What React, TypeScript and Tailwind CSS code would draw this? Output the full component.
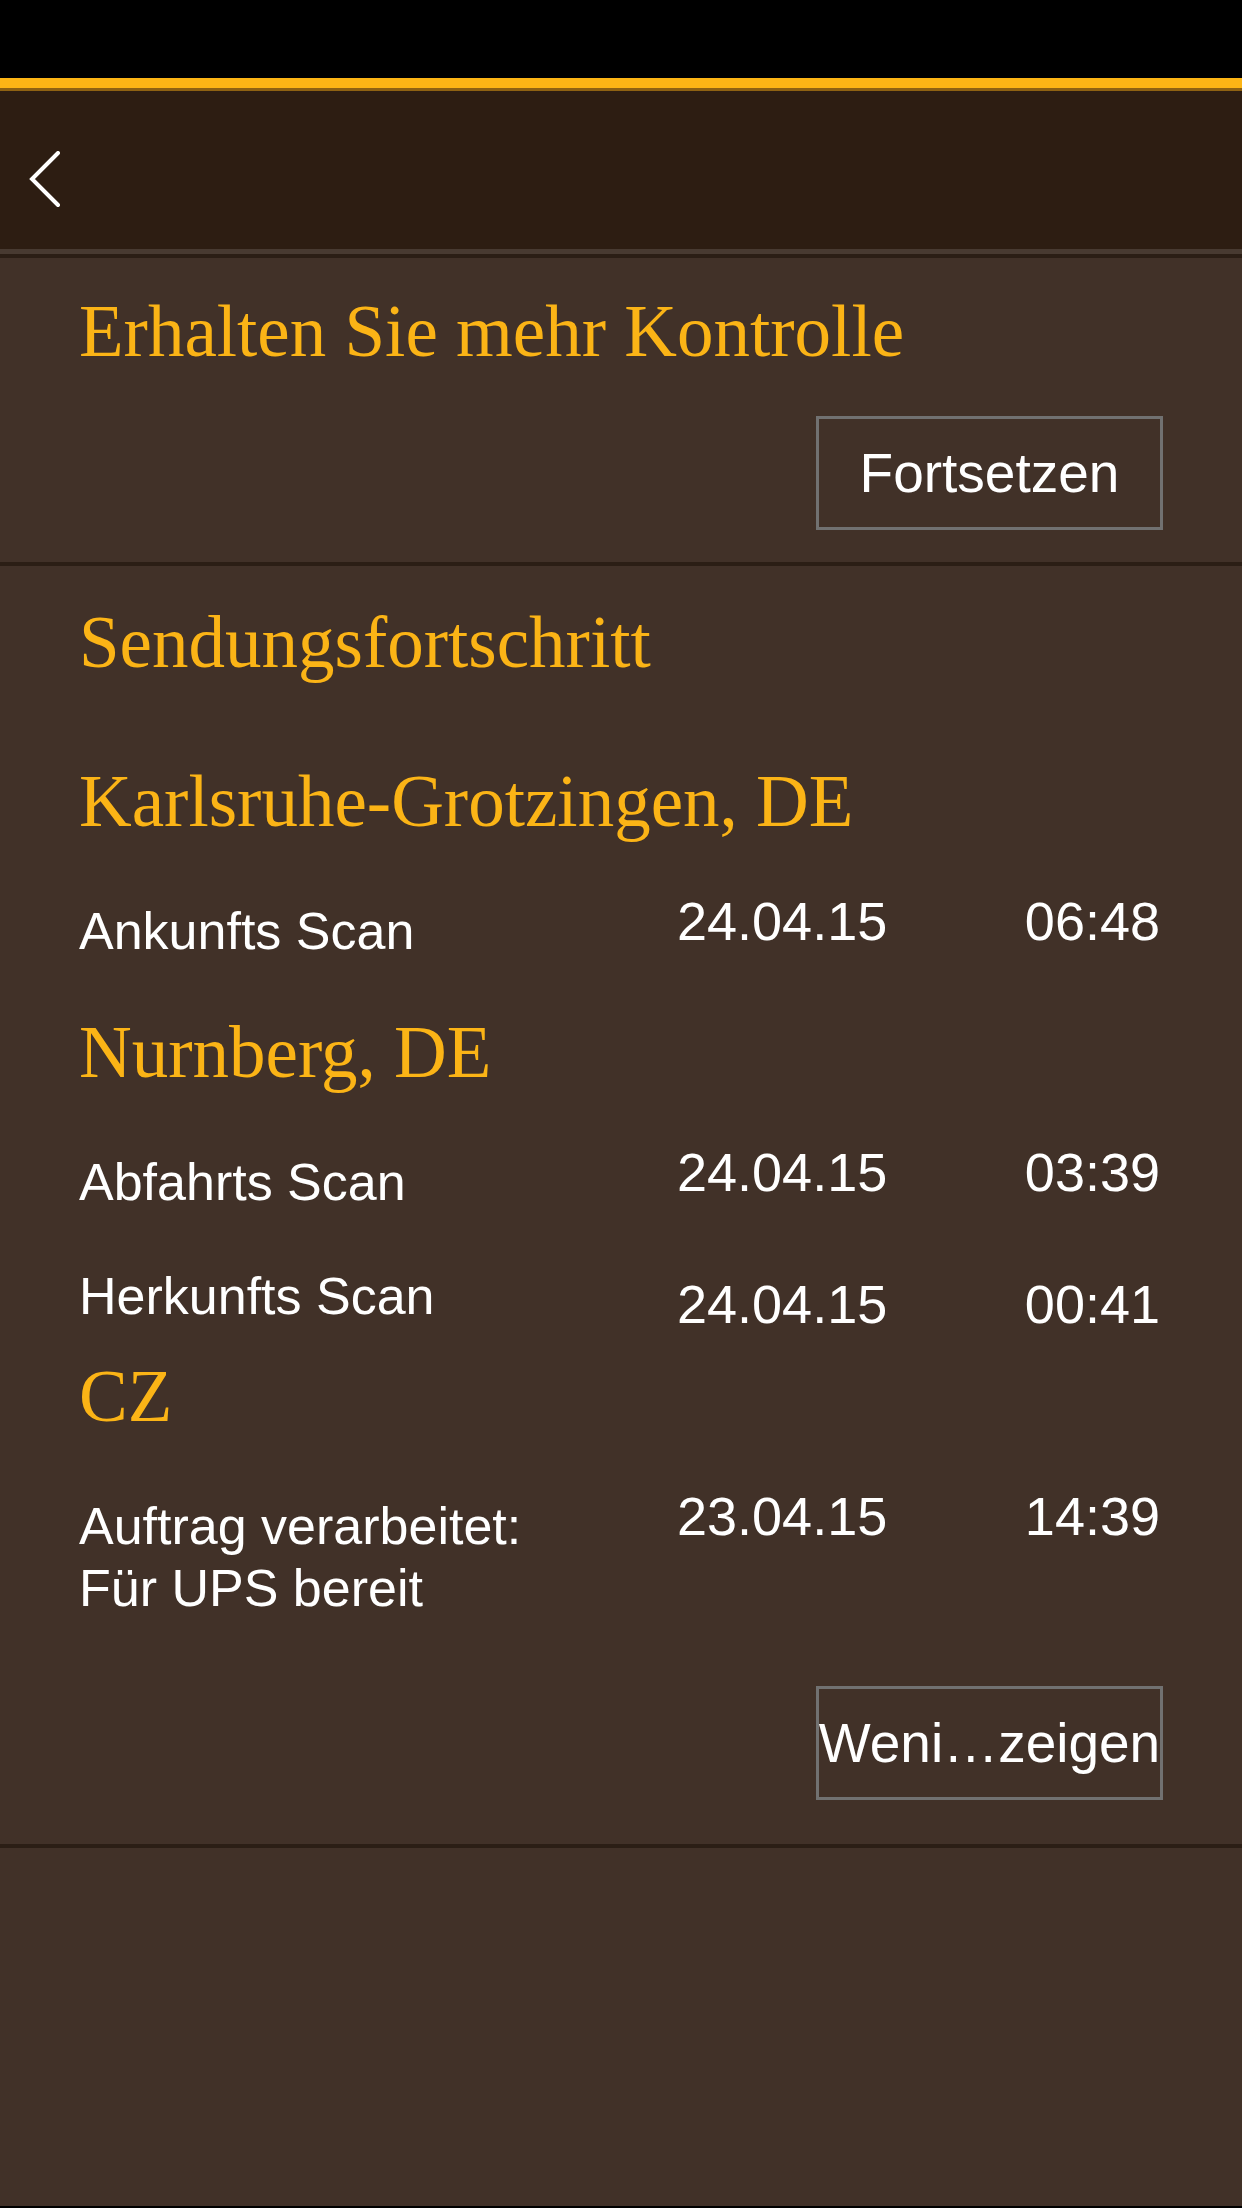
const serif = { fontFamily: '"Liberation Serif", "Times New Roman", serif' };

type ScanRow = {
  label: string[];
  date: string;
  time: string;
  labelOffset: string;
  dateOffset: string;
  gap: string;
};

type Stop = {
  place: string;
  gap: string;
  rows: ScanRow[];
};

const stops: Stop[] = [
  {
    place: "Karlsruhe-Grotzingen, DE",
    gap: "mt-[86px]",
    rows: [
      { label: ["Ankunfts Scan"], date: "24.04.15", time: "06:48", labelOffset: "mt-[6px]", dateOffset: "mt-0", gap: "mt-[56px]" },
    ],
  },
  {
    place: "Nurnberg, DE",
    gap: "mt-[54px]",
    rows: [
      { label: ["Abfahrts Scan"], date: "24.04.15", time: "03:39", labelOffset: "mt-[6px]", dateOffset: "mt-0", gap: "mt-[56px]" },
      { label: ["Herkunfts Scan"], date: "24.04.15", time: "00:41", labelOffset: "mt-0", dateOffset: "mt-[12px]", gap: "mt-[52px]" },
    ],
  },
  {
    place: "CZ",
    gap: "mt-[29px]",
    rows: [
      { label: ["Auftrag verarbeitet:", "Für UPS bereit"], date: "23.04.15", time: "14:39", labelOffset: "mt-[6px]", dateOffset: "mt-0", gap: "mt-[56px]" },
    ],
  },
];

function OutlineButton({ children }: { children: string }) {
  return (
    <div className="flex justify-end">
      <button
        className="flex h-[114px] w-[347px] items-center justify-center overflow-hidden whitespace-nowrap border-[3px] border-[#717171] text-[55px] leading-none text-white"
        type="button"
      >
        {children}
      </button>
    </div>
  );
}

export default function App() {
  return (
    <div
      className="flex h-[2208px] w-[1242px] flex-col bg-[#413128]"
      style={{ fontFamily: '"Liberation Sans", Arial, sans-serif' }}
    >
      <div className="h-[78px] bg-black" />
      <div className="h-[13px] border-b-[3px] border-[#8f6212] bg-[#fdb515]" />

      <header className="h-[158px] bg-[#2d1d12] pl-[29px] pt-[60px]">
        <svg width="32" height="58" viewBox="0 0 32 58" fill="none">
          <polyline points="29,2 3,28 29,54" stroke="white" strokeWidth="4" strokeLinecap="round" strokeLinejoin="miter" />
        </svg>
      </header>
      <div className="h-[5px] bg-[#483a31]" />
      <div className="h-[4px] bg-[#2b1e15]" />

      <section className="border-b-4 border-[#2b1e15] px-[79px] pb-[32px] pt-[37px]">
        <h2 className="text-[73px] leading-none text-[#fbb416]" style={serif}>
          Erhalten Sie mehr Kontrolle
        </h2>
        <div className="mt-[48px]">
          <OutlineButton>Fortsetzen</OutlineButton>
        </div>
      </section>

      <section className="border-b-4 border-[#2b1e15] px-[79px] pb-[44px] pt-[40px]">
        <h2 className="text-[73px] leading-none text-[#fbb416]" style={serif}>
          Sendungsfortschritt
        </h2>

        {stops.map((stop) => (
          <div key={stop.place}>
            <h3 className={`${stop.gap} text-[73px] leading-none text-[#fbb416]`} style={serif}>
              {stop.place}
            </h3>
            {stop.rows.map((row) => (
              <div key={row.time} className={`${row.gap} flex items-start text-white`}>
                <div className={`${row.labelOffset} w-[598px] text-[52px] leading-[62px]`}>
                  {row.label.map((line) => (
                    <div key={line}>{line}</div>
                  ))}
                </div>
                <div className={`${row.dateOffset} text-[54px] leading-none`}>{row.date}</div>
                <div className={`${row.dateOffset} ml-auto pr-[3px] text-[54px] leading-none`}>{row.time}</div>
              </div>
            ))}
          </div>
        ))}

        <div className="mt-[67px]">
          <OutlineButton>Weni…zeigen</OutlineButton>
        </div>
      </section>

      <div className="flex-1" />
      <div className="h-[2px] bg-black" />
    </div>
  );
}
